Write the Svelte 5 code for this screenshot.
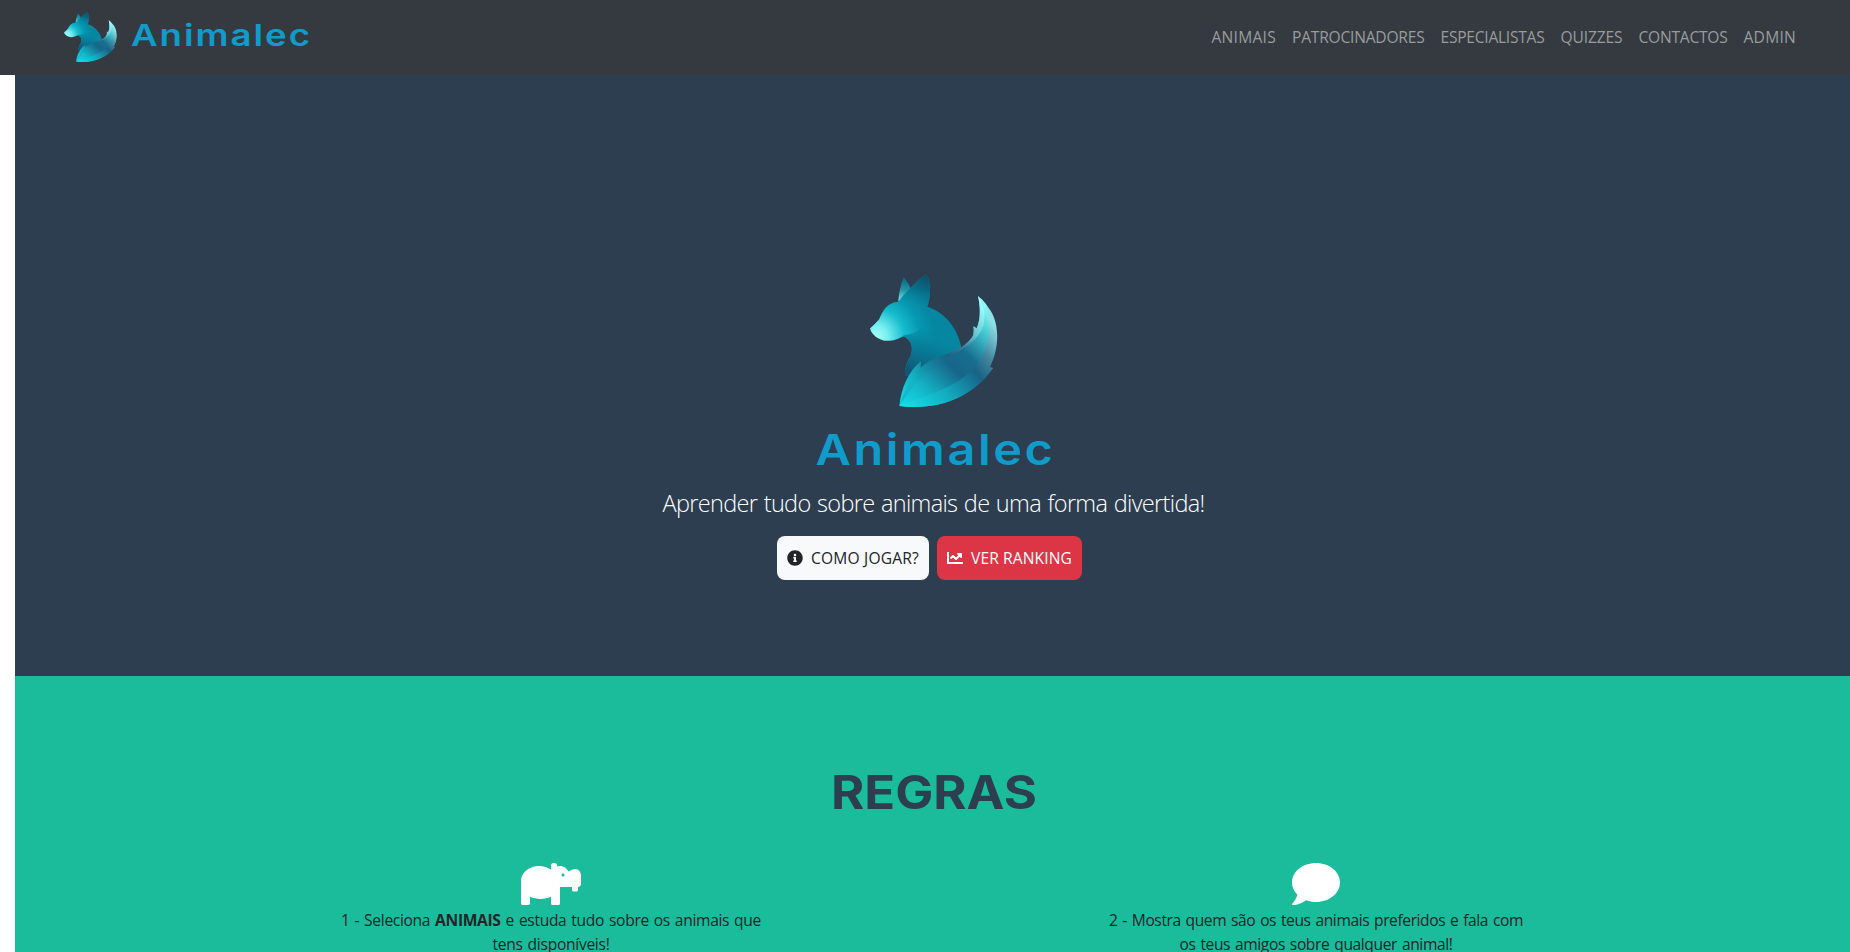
<script>
  const links = [
    { label: 'ANIMAIS', width: 64.5 },
    { label: 'PATROCINADORES', width: 132.5 },
    { label: 'ESPECIALISTAS', width: 104 },
    { label: 'QUIZZES', width: 62 },
    { label: 'CONTACTOS', width: 89 },
    { label: 'ADMIN', width: 52.5 }
  ];

  // Spreads the tracking of a line evenly so that it fills the given width.
  function fit(node, width) {
    const natural = node.getBoundingClientRect().width;
    node.style.letterSpacing = `${(width - natural) / node.textContent.length}px`;
  }
</script>

{#snippet fox(name)}
  <svg class={name} viewBox="60 30 384 398" preserveAspectRatio="none" aria-hidden="true">
    <defs>
      <radialGradient id="{name}-head" gradientUnits="userSpaceOnUse" cx="78" cy="218" r="175">
        <stop offset="0" stop-color="#a5fffb" /><stop offset=".2" stop-color="#78eff0" />
        <stop offset=".48" stop-color="#17bdcf" /><stop offset=".75" stop-color="#0699b2" /><stop offset="1" stop-color="#0587a2" />
      </radialGradient>
      <linearGradient id="{name}-ear" gradientUnits="userSpaceOnUse" x1="236" y1="36" x2="192" y2="135">
        <stop offset="0" stop-color="#104c67" /><stop offset=".4" stop-color="#0a6681" stop-opacity=".9" /><stop offset="1" stop-color="#0593ad" stop-opacity="0" />
      </linearGradient>
      <linearGradient id="{name}-back" gradientUnits="userSpaceOnUse" x1="160" y1="45" x2="150" y2="112">
        <stop offset="0" stop-color="#0b6e87" /><stop offset=".5" stop-color="#2795a6" /><stop offset="1" stop-color="#7beaea" />
      </linearGradient>
      <linearGradient id="{name}-chest" gradientUnits="userSpaceOnUse" x1="248" y1="190" x2="185" y2="325">
        <stop offset="0" stop-color="#0589a5" stop-opacity="0" /><stop offset=".4" stop-color="#087b97" stop-opacity=".8" /><stop offset="1" stop-color="#115575" />
      </linearGradient>
      <linearGradient id="{name}-tail" gradientUnits="userSpaceOnUse" x1="150" y1="420" x2="425" y2="130">
        <stop offset="0" stop-color="#16dbe7" /><stop offset=".22" stop-color="#13b2c4" /><stop offset=".47" stop-color="#17668a" />
        <stop offset=".62" stop-color="#186e8f" /><stop offset=".82" stop-color="#43c6d0" /><stop offset="1" stop-color="#9affff" />
      </linearGradient>
      <linearGradient id="{name}-inner" gradientUnits="userSpaceOnUse" x1="190" y1="350" x2="395" y2="130">
        <stop offset="0" stop-color="#13b4c6" /><stop offset=".22" stop-color="#15849d" /><stop offset=".42" stop-color="#1a6284" /><stop offset=".6" stop-color="#4b7f9b" />
        <stop offset=".76" stop-color="#73cbd3" /><stop offset="1" stop-color="#9effff" />
      </linearGradient>
      <linearGradient id="{name}-outer" gradientUnits="userSpaceOnUse" x1="165" y1="423" x2="433" y2="180">
        <stop offset="0" stop-color="#14dfe7" /><stop offset=".32" stop-color="#12acbf" /><stop offset=".62" stop-color="#176386" />
        <stop offset=".78" stop-color="#44879f" /><stop offset="1" stop-color="#8de2e8" />
      </linearGradient>
    </defs>
    <path fill="url(#{name}-back)" d="M145 112C147 85 153 58 161 40C171 51 178 63 182 74L160 115Z" />
    <path fill="url(#{name}-head)" d="M60 193C69 184 80 174 87 166C97 142 111 115 145 113C166 85 202 49 230 31C244 61 242 102 232 128C280 142 323 190 334 250L300 330L165 335C164 310 172 293 182 275C191 247 184 228 160 216C144 224 132 230 112 230C89 229 73 216 65 204C61 200 63 197 60 193Z" />
    <path fill="url(#{name}-chest)" d="M160 215C190 212 205 204 216 194L280 150L334 250L300 330L165 335C164 310 172 293 182 275C191 247 184 228 160 216Z" />
    <path fill="url(#{name}-ear)" d="M145 113C166 85 202 49 230 31C244 61 242 102 232 128L205 157Z" />
    <path d="M160 215Q194 212 216 194" fill="none" stroke="#087f99" stroke-width="1.5" />
    <path fill="url(#{name}-tail)" d="M148 425C154 370 174 322 213 290L212 311C261 271 324 274 365 221Q374 209 370 186L380 192C393 164 391 126 384 96C438 137 457 229 419 309L429 311C369 397 270 439 148 425Z" />
    <path fill="url(#{name}-inner)" d="M212 311C250 269 324 274 365 221Q374 209 370 186L380 192C393 164 391 126 384 96C405 125 409 166 397 193C370 246 323 260 280 290C240 316 200 345 148 425C160 385 185 340 212 311Z" opacity=".8" />
    <path fill="url(#{name}-outer)" d="M148 425C230 392 338 366 389 290C421 242 426 179 408 124C440 149 459 231 419 309L429 311C369 397 270 439 148 425Z" />
  </svg>
{/snippet}

<header>
  <a class="brand" href="#top">
    {@render fox('fox-small')}
    <svg class="brand-name" width="190" height="40" viewBox="0 0 190 40">
      <text x="5" y="28.5" textLength="181" lengthAdjust="spacingAndGlyphs">Animalec</text>
    </svg>
  </a>
  <nav>
    {#each links as link}
      <a href="#{link.label.toLowerCase()}" style:width="{link.width}px"><span use:fit={link.width}>{link.label}</span></a>
    {/each}
  </nav>
</header>

<main id="top">
  <section class="hero">
    {@render fox('fox-large')}
    <svg class="hero-name" width="270" height="60" viewBox="0 0 270 60">
      <text x="15.5" y="49.5" textLength="240" lengthAdjust="spacingAndGlyphs">Animalec</text>
    </svg>
    <p><span use:fit={542}>Aprender tudo sobre animais de uma forma divertida!</span></p>
    <div class="actions">
      <button class="light">
        <svg width="16" height="16" viewBox="0 0 512 512"><path fill="currentColor" d="M256 8C119.043 8 8 119.083 8 256c0 136.997 111.043 248 248 248s248-111.003 248-248C504 119.083 392.957 8 256 8zm0 110c23.196 0 42 18.804 42 42s-18.804 42-42 42-42-18.804-42-42 18.804-42 42-42zm56 254c0 6.627-5.373 12-12 12h-88c-6.627 0-12-5.373-12-12v-24c0-6.627 5.373-12 12-12h12v-64h-12c-6.627 0-12-5.373-12-12v-24c0-6.627 5.373-12 12-12h64c6.627 0 12 5.373 12 12v100h12c6.627 0 12 5.373 12 12v24z" /></svg>
        <span use:fit={108}>COMO JOGAR?</span>
      </button>
      <button class="danger">
        <svg width="16" height="16" viewBox="0 0 512 512"><path fill="currentColor" d="M496 384H64V80c0-8.84-7.16-16-16-16H16C7.16 64 0 71.16 0 80v336c0 17.67 14.33 32 32 32h464c8.84 0 16-7.16 16-16v-32c0-8.84-7.16-16-16-16zM464 96H345.94c-21.38 0-32.09 25.85-16.97 40.97l32.4 32.4L288 242.75l-73.37-73.37c-12.5-12.5-32.76-12.5-45.25 0l-68.69 68.69c-6.25 6.25-6.25 16.38 0 22.63l22.62 22.62c6.25 6.25 16.38 6.25 22.63 0L192 237.25l73.37 73.37c12.5 12.5 32.76 12.5 45.25 0l96-96 32.4 32.4c15.12 15.12 40.97 4.41 40.97-16.97V112c.01-8.84-7.15-16-15.99-16z" /></svg>
        <span use:fit={101}>VER RANKING</span>
      </button>
    </div>
  </section>

  <section class="rules">
    <svg class="title" width="230" height="65" viewBox="0 0 230 65" role="heading" aria-level="2">
      <text x="11" y="49" textLength="206" lengthAdjust="spacingAndGlyphs">REGRAS</text>
    </svg>
    <div class="columns">
      <article>
        <svg width="60" height="48" viewBox="0 0 640 512"><path fill="#fff" d="M581.12 96.2c-27.67-.15-52.5 17.58-76.6 26.62C489.98 88.27 455.83 64 416 64c-11.28 0-21.95 2.3-32 5.88V56c0-13.26-10.75-24-24-24h-16c-13.25 0-24 10.74-24 24v48.98C286.01 79.58 241.24 64 192 64 85.96 64 0 135.64 0 224v240c0 8.84 7.16 16 16 16h64c8.84 0 16-7.16 16-16v-70.79C128.35 407.57 166.72 416 208 416s79.65-8.43 112-22.79V464c0 8.84 7.16 16 16 16h64c8.84 0 16-7.16 16-16V288h128v32c0 8.84 7.16 16 16 16h32c8.84 0 16-7.16 16-16v-32c17.67 0 32-14.33 32-32v-92.02c0-34.09-24.79-67.59-58.88-67.78zM448 176c-8.84 0-16-7.16-16-16s7.16-16 16-16 16 7.16 16 16-7.16 16-16 16z" /></svg>
        <div class="line"><span use:fit={420}>1 - Seleciona <b>ANIMAIS</b> e estuda tudo sobre os animais que</span></div>
        <div class="line"><span use:fit={117}>tens disponíveis!</span></div>
      </article>
      <article>
        <svg width="48" height="48" viewBox="0 0 512 512"><path fill="#fff" d="M256 32C114.6 32 0 125.1 0 240c0 49.6 21.4 95 57 130.7C44.5 421.1 2.7 466 2.2 466.5c-2.2 2.3-2.8 5.7-1.5 8.7S4.8 480 8 480c66.3 0 116-31.8 140.6-51.4 32.7 12.3 69 19.4 107.4 19.4 141.4 0 256-93.1 256-208S397.4 32 256 32z" /></svg>
        <div class="line"><span use:fit={414}>2 - Mostra quem são os teus animais preferidos e fala com</span></div>
        <div class="line"><span use:fit={273}>os teus amigos sobre qualquer animal!</span></div>
      </article>
    </div>
  </section>
</main>

<style>
  :global(body) {
    margin: 0;
    background: #fff;
    overflow: hidden;
    font-family: 'Open Sans', 'Noto Sans', sans-serif;
    font-size: 15.6px;
    color: #212529;
  }
  :global(#app) {
    height: 952px;
    overflow: hidden;
  }
  svg {
    display: block;
    flex: none;
  }
  span {
    white-space: nowrap;
  }
  header {
    box-sizing: border-box;
    height: 75px;
    padding: 0 54px 2px 64px;
    display: flex;
    align-items: center;
    justify-content: space-between;
    background: #343a40;
  }
  .brand {
    display: flex;
    align-items: center;
    gap: 9px;
  }
  .fox-small {
    width: 53px;
    height: 50px;
  }
  .brand-name,
  .hero-name {
    font-family: 'Inter', sans-serif;
    font-weight: 600;
    fill: #109bcb;
  }
  .brand-name {
    font-size: 30px;
    letter-spacing: 1.6px;
  }
  nav {
    display: flex;
    gap: 16px;
  }
  nav a {
    color: #999c9f;
    text-decoration: none;
    line-height: 24px;
    white-space: nowrap;
  }
  main {
    margin-left: 15px;
  }
  .hero {
    box-sizing: border-box;
    height: 601px;
    padding-top: 199px;
    display: flex;
    flex-direction: column;
    align-items: center;
    background: #2c3e50;
    color: #fff;
  }
  .fox-large {
    width: 128px;
    height: 133px;
    margin-left: 2px;
  }
  .hero-name {
    margin: 8px 0 0 5px;
    font-size: 43px;
    letter-spacing: 2.3px;
  }
  .hero p {
    margin: 10px 0 15px 2px;
    font-size: 23.5px;
    font-weight: 300;
    line-height: 36px;
    word-spacing: 1px;
  }
  .actions {
    display: flex;
    gap: 8px;
    margin-right: 6px;
  }
  button {
    box-sizing: border-box;
    height: 44px;
    padding: 0 10px;
    display: flex;
    align-items: center;
    gap: 8px;
    border: 0;
    border-radius: 8px;
    font: inherit;
    line-height: 24px;
  }
  .light {
    width: 152px;
    background: #f8f9fa;
    color: #212529;
  }
  .danger {
    width: 145px;
    background: #dc3545;
    color: #fff;
  }
  .rules {
    height: 276px;
    padding-top: 84px;
    box-sizing: border-box;
    overflow: hidden;
    display: flex;
    flex-direction: column;
    align-items: center;
    background: #1abc9c;
  }
  .title {
    margin-left: 5px;
    font-family: 'Inter', sans-serif;
    font-size: 46px;
    font-weight: 700;
    fill: #2c3e50;
  }
  .columns {
    width: 1530px;
    margin: 35px 0 0 2px;
    display: grid;
    grid-template-columns: 1fr 1fr;
  }
  article {
    display: flex;
    flex-direction: column;
    align-items: center;
    word-spacing: 1.2px;
  }
  .line {
    line-height: 24px;
    height: 24px;
  }
</style>
